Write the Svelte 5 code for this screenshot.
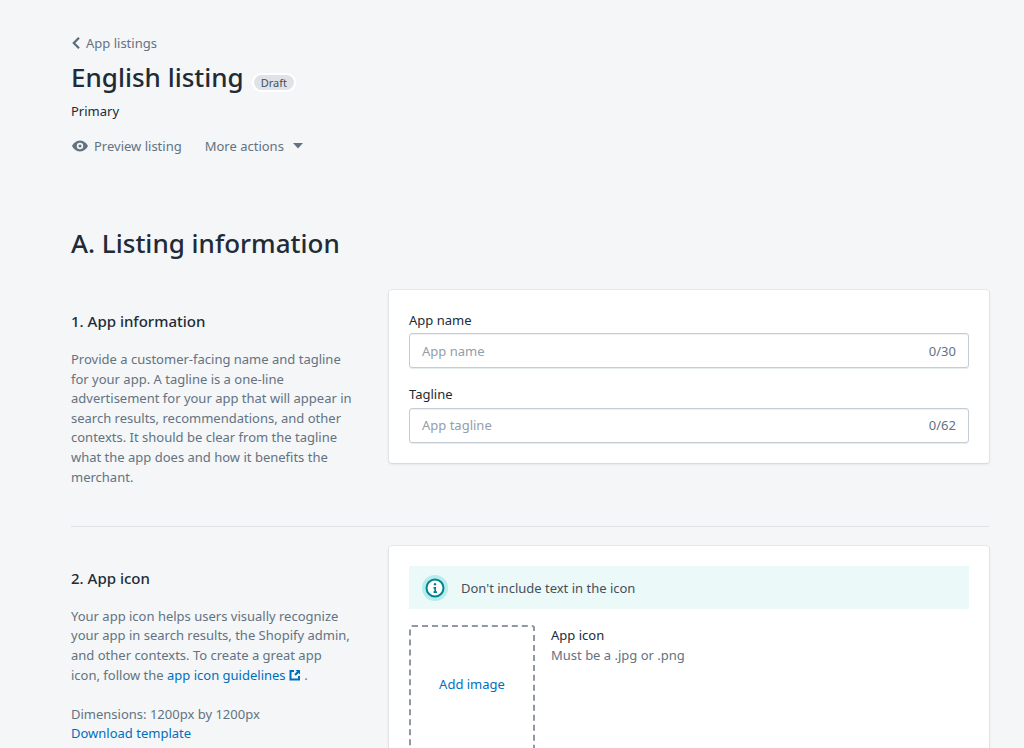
<script>
  const fields = [
    { label: 'App name', placeholder: 'App name', count: '0/30' },
    { label: 'Tagline', placeholder: 'App tagline', count: '0/62' }
  ];
</script>

<div class="page">
  <header class="head">
    <a class="back" href="#back">
      <svg width="10" height="12" viewBox="0 0 10 12" aria-hidden="true"><path d="M8 .8 2.800 6 8 11.200" fill="none" stroke="#5c6b78" stroke-width="2.200"/></svg>
      <span>App listings</span>
    </a>
    <div class="title-row">
      <h1>English listing</h1>
      <span class="badge">Draft</span>
    </div>
    <p class="primary">Primary</p>
    <div class="actions">
      <span class="action">
        <svg width="18" height="18" viewBox="0 0 18 18" aria-hidden="true"><path fill="#637381" fill-rule="evenodd" d="M9 3.500c4 0 7 3.400 8 5.500-1 2.100-4 5.500-8 5.500S2 11.100 1 9c1-2.100 4-5.500 8-5.500Zm0 2.300a3.200 3.200 0 1 0 0 6.400 3.200 3.200 0 0 0 0-6.400Zm0 1.700a1.500 1.500 0 1 1 0 3 1.500 1.500 0 0 1 0-3Z"/></svg>
        <span>Preview listing</span>
      </span>
      <span class="action more">
        <span>More actions</span>
        <svg width="10" height="6" viewBox="0 0 10 6" aria-hidden="true"><path fill="#637381" d="M0 0h10L5 5.500z"/></svg>
      </span>
    </div>
  </header>

  <h2>A. Listing information</h2>

  <section class="row first">
    <div class="desc">
      <h3>1. App information</h3>
      <p>Provide a customer-facing name and tagline for your app. A tagline is a one-line advertisement for your app that will appear in search results, recommendations, and other contexts. It should be clear from the tagline what the app does and how it benefits the merchant.</p>
    </div>
    <div class="card">
      {#each fields as f}
        <div class="field">
          <div class="label">{f.label}</div>
          <div class="input"><span class="ph">{f.placeholder}</span><span class="count">{f.count}</span></div>
        </div>
      {/each}
    </div>
  </section>

  <hr />

  <section class="row">
    <div class="desc second">
      <h3>2. App icon</h3>
      <p>Your app icon helps users visually recognize your app in search results, the Shopify admin, and other contexts. To create a great app icon, follow the <a href="#g">app icon guidelines <svg class="ext" width="12" height="12" viewBox="0 0 12 12" aria-hidden="true"><path fill="none" stroke="#006fbb" stroke-width="2" d="M5 2H1.500v8.500H10V7"/><path fill="#006fbb" d="M6.500 1H11v4.500L9.500 4 6.800 6.700 5.300 5.200 8 2.500z"/></svg></a> .</p>
      <p class="dim">Dimensions: 1200px by 1200px<br /><a href="#d">Download template</a></p>
    </div>
    <div class="card tall">
      <div class="banner">
        <span class="ring">
          <svg width="20" height="20" viewBox="0 0 20 20" aria-hidden="true"><circle cx="10" cy="10" r="8.500" fill="#fff" stroke="#00848e" stroke-width="2"/><circle cx="10" cy="6.300" r="1.200" fill="#00848e"/><path fill="#00848e" d="M8.500 9h2.500v4.200h1V15H8.500v-1.800h.8V10.800h-.8z"/></svg>
        </span>
        <span>Don't include text in the icon</span>
      </div>
      <div class="upload">
        <div class="drop"><a href="#add">Add image</a></div>
        <div class="info">
          <div>App icon</div>
          <div class="sub">Must be a .jpg or .png</div>
        </div>
      </div>
    </div>
  </section>
</div>

<style>
  :global(body) {
    margin: 0;
    background: #f4f6f8;
    color: #212b36;
    font-family: "Noto Sans", "Open Sans", sans-serif;
    font-size: 13px;
  }
  .page {
    height: 748px;
    overflow: hidden;
    box-sizing: border-box;
    padding: 33px 35px 0 71px;
  }
  a { color: #006fbb; text-decoration: none; }
  .back {
    display: flex;
    align-items: center;
    gap: 5px;
    height: 19px;
    color: #637381;
  }
  .title-row {
    display: flex;
    align-items: center;
    gap: 8px;
    margin-top: 6px;
    height: 38px;
  }
  h1 { margin: 0; font-size: 26px; line-height: 38px; font-weight: 500; }
  .badge {
    background: #dfe3e8;
    border: 2px solid #fff;
    border-radius: 10px;
    padding: 0 7px;
    font-size: 11px;
    line-height: 15px;
    color: #454f5b;
    margin-top: 11px;
  }
  .primary { margin: 6px 0 0; line-height: 19px; }
  .actions { display: flex; align-items: center; gap: 23px; margin-top: 15px; height: 20px; color: #637381; }
  .action { display: flex; align-items: center; gap: 5px; }
  .more { gap: 9px; }
  h2 { margin: 68px 0 0; font-size: 26px; line-height: 38px; font-weight: 500; }
  .row { display: flex; justify-content: space-between; align-items: flex-start; }
  .first { margin-top: 28px; }
  .desc { width: 282px; padding-top: 19px; }
  .desc.second { padding-top: 20px; }
  h3 { margin: 0; font-size: 15px; line-height: 24px; font-weight: 500; }
  .desc p { margin: 17px 0 0; line-height: 19.600px; color: #637381; }
  .desc.second p { margin-top: 16.600px; }
  .desc.second p.dim { margin-top: 19.600px; }
  .ext { vertical-align: -1px; }
  .card {
    width: 600px;
    box-sizing: border-box;
    background: #fff;
    border-radius: 3px;
    padding: 20px;
    box-shadow: 0 0 0 1px rgba(63, 63, 68, .05), 0 1px 3px 0 rgba(63, 63, 68, .15);
  }
  .card.tall { height: 260px; }
  .field + .field { margin-top: 16px; }
  .label { line-height: 21px; margin-bottom: 2.400px; }
  .input {
    display: flex;
    justify-content: space-between;
    align-items: center;
    height: 35px;
    box-sizing: border-box;
    border: 1px solid #c4cdd5;
    border-radius: 3px;
    padding: 0 12px;
    box-shadow: inset 0 1px 0 0 rgba(102, 113, 123, .1), 0 1px 0 0 rgba(195, 207, 216, .4);
  }
  .ph { color: #919eab; }
  .count { color: #637381; }
  hr { border: 0; border-top: 1px solid #dfe3e8; margin: 39px 0 19px; }
  .banner {
    display: flex;
    align-items: center;
    gap: 13px;
    height: 43px;
    padding: 0 13px;
    background: #ebf9f9;
    color: #454f5b;
  }
  .ring {
    width: 26px;
    height: 26px;
    border-radius: 50%;
    background: #b7ecec;
    display: flex;
    align-items: center;
    justify-content: center;
  }
  .upload { display: flex; gap: 16px; margin-top: 16px; }
  .drop {
    width: 126px;
    height: 150px;
    box-sizing: border-box;
    border: 2px dashed #8f98a3;
    border-radius: 3px;
    padding-top: 48px;
    text-align: center;
  }
  .info { line-height: 19.600px; padding-top: 1px; }
  .sub { color: #637381; }
</style>
